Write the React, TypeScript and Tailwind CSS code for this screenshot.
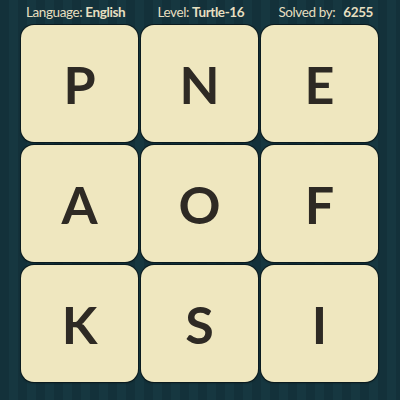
import React from 'react';

const letters = ['P', 'N', 'E', 'A', 'O', 'F', 'K', 'S', 'I'];

function Tile({ letter }: { letter: string }) {
  return (
    <div className="flex h-[117px] w-[117px] items-center justify-center rounded-[13px] bg-[#efe7bf] shadow-[0_0_0_1px_#0b1b1f,0_1px_2px_#0b1b1f]">
      <span className="text-[52px] font-bold leading-none text-[#2e2a24]">{letter}</span>
    </div>
  );
}

export default function App() {
  return (
    <div className="h-[400px] w-[400px] overflow-hidden bg-[repeating-linear-gradient(90deg,#13313a_0px,#13313a_9px,#163740_9px,#163740_18px)] font-['Lato','Open_Sans',sans-serif]">
      {/* Header */}
      <div className="flex h-[25px] items-center justify-between pl-[26px] pr-[27px] text-[13.5px] tracking-[-0.4px] text-[#e6dfc0]">
        <span>
          Language: <b className="font-bold">English</b>
        </span>
        <span className="-ml-[2px]">
          Level: <b className="font-bold">Turtle-16</b>
        </span>
        <span>
          Solved by: <b className="ml-[5px] font-bold">6255</b>
        </span>
      </div>

      {/* Board */}
      <div className="grid grid-cols-[117px_117px_117px] gap-[3px] pl-[21px]">
        {letters.map((l) => (
          <Tile key={l} letter={l} />
        ))}
      </div>
    </div>
  );
}
